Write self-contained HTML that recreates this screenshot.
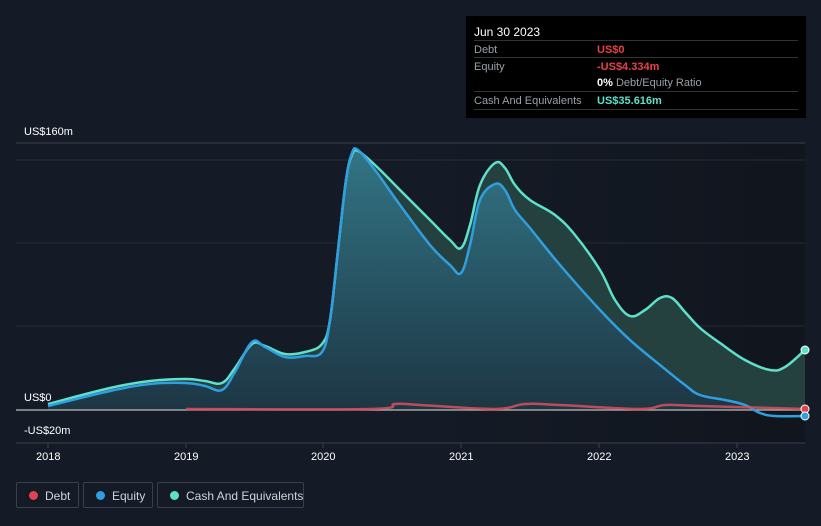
<!DOCTYPE html>
<html><head><meta charset="utf-8"><style>
body{margin:0;width:821px;height:526px;background:#151b26;font-family:"Liberation Sans",sans-serif;overflow:hidden;position:relative}
.tt{position:absolute;left:466px;top:16px;width:340px;height:102px;background:#000;color:#fff;font-size:11px}
.tt .h{position:absolute;left:8px;top:9px;font-size:12px}
.row{position:absolute;left:8px;width:324px;height:17px;border-top:1px solid #333}
.row span{position:absolute;top:3px;white-space:nowrap}
.lbl{left:0;color:#9aa0a8}
.v{left:123px}
.leg{position:absolute;top:482px;height:26px;border:1px solid #3a404b;border-radius:2px;color:#cfd3d8;font-size:12px;box-sizing:border-box;white-space:nowrap}
.leg i{position:absolute;left:12px;top:8px;width:9px;height:9px;border-radius:50%}
.leg span{position:absolute;left:28px;top:6px}
.ax{position:absolute;color:#fff;font-size:11px}
</style></head><body>
<svg width="821" height="526" style="position:absolute;left:0;top:0">
<defs>
<linearGradient id="bg" x1="0" x2="1"><stop offset="0" stop-color="#151b26"/><stop offset="0.5" stop-color="#111620"/><stop offset="1" stop-color="#0e1117"/></linearGradient>
<linearGradient id="eq" x1="0" y1="0" x2="0" y2="1"><stop offset="0" stop-color="#327585"/><stop offset="1" stop-color="#1d3543"/></linearGradient>
</defs>
<rect x="420" y="143" width="385" height="300" fill="url(#bg)" opacity="0.6"/>
<line x1="16" y1="143" x2="805" y2="143" stroke="#3a3f48"/>
<line x1="16" y1="160" x2="805" y2="160" stroke="#262b33"/>
<line x1="16" y1="243" x2="805" y2="243" stroke="#262b33"/>
<line x1="16" y1="326" x2="805" y2="326" stroke="#262b33"/>
<line x1="16" y1="443" x2="805" y2="443" stroke="#3a3f48"/>
<g stroke="#3a3f48"><line x1="48" y1="443" x2="48" y2="448"/><line x1="186" y1="443" x2="186" y2="448"/><line x1="323" y1="443" x2="323" y2="448"/><line x1="461" y1="443" x2="461" y2="448"/><line x1="599" y1="443" x2="599" y2="448"/><line x1="737" y1="443" x2="737" y2="448"/></g>
<path id="cf" fill="#24403f"/>
<path id="ef" fill="url(#eq)"/>
<line x1="16" y1="410" x2="805" y2="410" stroke="#bbb" stroke-width="1.2"/>
<path id="cl" fill="none" stroke="#5ee0cb" stroke-width="2.5"/>
<path id="el" fill="none" stroke="#2f9fe0" stroke-width="2.5"/>
<path id="dl" fill="none" stroke="#d9505e" stroke-width="2.5" opacity="0.85"/>
<circle cx="805" cy="350" r="4" fill="#5ee0cb" stroke="#fff" stroke-width="1"/>
<circle cx="805" cy="409" r="4" fill="#e0424f" stroke="#fff" stroke-width="1"/>
<circle cx="805" cy="416" r="4" fill="#2f9fe0" stroke="#fff" stroke-width="1"/>
</svg>
<script>
var C=[[48,404],[110,388],[150,381],[186,379],[205,381],[222,383],[235,368],[252,344],[265,346],[285,354],[305,352],[322,344],[330,320],[338,250],[346,180],[352,155],[358,151],[375,165],[400,190],[430,220],[450,240],[461,248],[470,225],[480,185],[495,163],[505,168],[515,185],[530,200],[555,215],[575,235],[600,270],[615,300],[630,316],[645,310],[660,298],[672,298],[685,312],[700,328],[720,343],[745,360],[770,370],[785,367],[805,350]];
var E=[[48,406],[110,391],[150,384],[186,383],[205,386],[222,390],[235,372],[252,342],[265,347],[285,357],[305,356],[322,352],[330,320],[338,250],[346,180],[352,153],[358,150],[375,170],[400,205],[430,245],[450,265],[461,273],[470,245],[480,200],[495,184],[505,190],[515,210],[530,228],[560,265],[600,310],[630,340],[660,365],[685,385],[700,395],[725,400],[745,405],[760,413],[775,416],[805,416]];
var D=[[186,409],[370,409],[395,404],[420,405],[495,409],[525,404],[560,405],[640,409],[665,405],[700,406],[805,409]];
function sm(p){var d="M"+p[0][0]+","+p[0][1];for(var i=0;i<p.length-1;i++){var a=p[i-1]||p[i],b=p[i],c=p[i+1],e=p[i+2]||c;var t=0.18;d+=" C"+(b[0]+(c[0]-a[0])*t)+","+(b[1]+(c[1]-a[1])*t)+" "+(c[0]-(e[0]-b[0])*t)+","+(c[1]-(e[1]-b[1])*t)+" "+c[0]+","+c[1];}return d;}
function g(i){return document.getElementById(i);}
g("cl").setAttribute("d",sm(C));g("el").setAttribute("d",sm(E));g("dl").setAttribute("d",sm(D));
g("cf").setAttribute("d",sm(C)+" L805,410 L48,410 Z");
g("ef").setAttribute("d",sm(E.slice(0,37))+" L760,410 L48,410 Z");
</script>
<div class="ax" style="left:24px;top:126px">US$160m</div>
<div class="ax" style="left:24px;top:392px">US$0</div>
<div class="ax" style="left:24px;top:425px">-US$20m</div>
<div class="ax" style="left:36px;top:451px">2018</div>
<div class="ax" style="left:174px;top:451px">2019</div>
<div class="ax" style="left:311px;top:451px">2020</div>
<div class="ax" style="left:449px;top:451px">2021</div>
<div class="ax" style="left:587px;top:451px">2022</div>
<div class="ax" style="left:725px;top:451px">2023</div>
<div class="tt"><div class="h">Jun 30 2023</div>
<div class="row" style="top:24px"><span class="lbl">Debt</span><span class="v" style="color:#e8414b;font-weight:bold">US$0</span></div>
<div class="row" style="top:41px"><span class="lbl">Equity</span><span class="v" style="color:#e8414b;font-weight:bold">-US$4.334m</span></div>
<div class="row" style="top:58px;border-top:none"><span class="v"><b>0%</b> <span style="position:static;color:#9aa0a8">Debt/Equity Ratio</span></span></div>
<div class="row" style="top:75px"><span class="lbl">Cash And Equivalents</span><span class="v" style="color:#5ee0cb;font-weight:bold">US$35.616m</span></div>
<div class="row" style="top:93px;height:0"></div>
</div>
<div class="leg" style="left:16px;width:63px"><i style="background:#e0424f"></i><span>Debt</span></div>
<div class="leg" style="left:83px;width:70px"><i style="background:#2f9fe0"></i><span>Equity</span></div>
<div class="leg" style="left:157px;width:147px"><i style="background:#5ee0cb"></i><span>Cash And Equivalents</span></div>
</body></html>
